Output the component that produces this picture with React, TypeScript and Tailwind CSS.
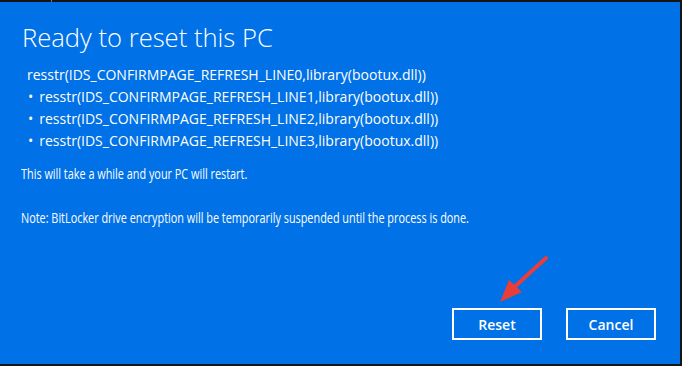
const lines = [
  "resstr(IDS_CONFIRMPAGE_REFRESH_LINE1,library(bootux.dll))",
  "resstr(IDS_CONFIRMPAGE_REFRESH_LINE2,library(bootux.dll))",
  "resstr(IDS_CONFIRMPAGE_REFRESH_LINE3,library(bootux.dll))",
];

export default function App() {
  return (
    <div className="relative w-[682px] h-[366px] bg-[#0071e6] border-t-2 border-r-2 border-b-2 border-[#151515] text-white font-['Open_Sans',sans-serif] flex flex-col">
      {/* tiny notch on the top edge */}
      <div className="absolute -top-[2px] left-[51px] w-px h-[2px] bg-[#777]" />

      <h1 className="mt-[21px] ml-[22px] text-[25.6px] leading-[30px] font-light">
        Ready to reset this PC
      </h1>

      <div className="mt-[11px] text-[14px] leading-[22px]">
        <p className="ml-[27px]">
          resstr(IDS_CONFIRMPAGE_REFRESH_LINE0,library(bootux.dll))
        </p>
        <ul className="ml-[28px]">
          {lines.map((line) => (
            <li key={line} className="flex gap-[6px]">
              <span>•</span>
              <span>{line}</span>
            </li>
          ))}
        </ul>
        {/* these two lines are squeezed horizontally in the original */}
        <p className="ml-[21px] mt-[11px] origin-left scale-x-[0.776] whitespace-nowrap">
          This will take a while and your PC will restart.
        </p>
        <p className="ml-[21px] mt-[22px] origin-left scale-x-[0.776] whitespace-nowrap">
          Note: BitLocker drive encryption will be temporarily suspended until the process is done.
        </p>
      </div>

      <div className="mt-auto mb-[24px] mr-[24px] flex justify-end gap-[24px]">
        <button className="w-[90px] h-[32px] border-2 border-white text-[14px] font-semibold">
          Reset
        </button>
        <button className="w-[90px] h-[32px] border-2 border-white text-[14px] font-semibold">
          Cancel
        </button>
      </div>

      {/* annotation arrow */}
      <svg className="absolute left-0 top-0 pointer-events-none" width="682" height="366">
        <line x1="546" y1="256" x2="510" y2="289" stroke="#e93d3a" strokeWidth="4" strokeLinecap="round" />
        <polygon points="500,300 509,278 522,290" fill="#e93d3a" />
      </svg>
    </div>
  );
}
